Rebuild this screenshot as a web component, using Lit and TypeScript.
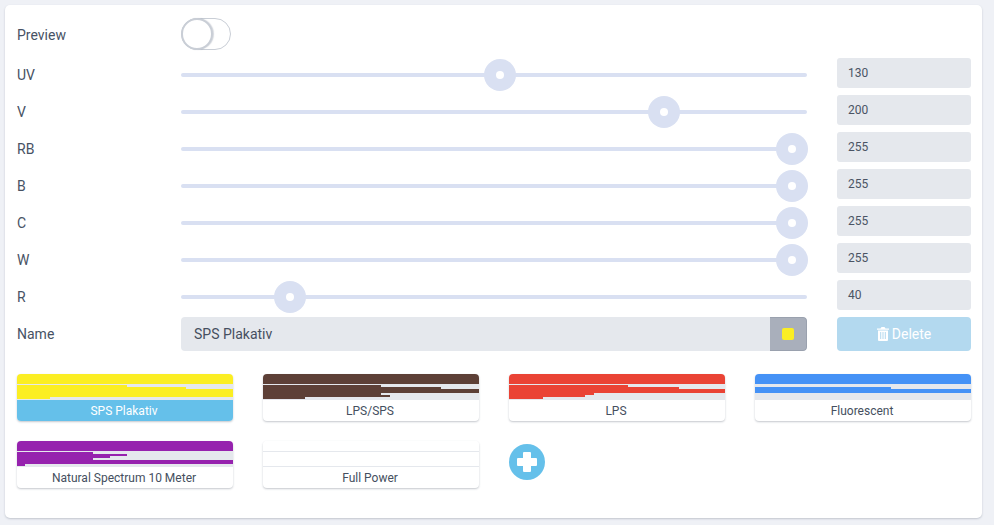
import { LitElement, html, css, svg } from "lit";
import { customElement } from "lit/decorators.js";

const sliders = [
  { l: "UV", v: 130 },
  { l: "V", v: 200 },
  { l: "RB", v: 255 },
  { l: "B", v: 255 },
  { l: "C", v: 255 },
  { l: "W", v: 255 },
  { l: "R", v: 40 },
];

const F = 216;
const cards = [
  { n: "SPS Plakativ", c: "#fbee23", w: [110, 169, F, F, F, F, 33], a: true },
  { n: "LPS/SPS", c: "#5d4037", w: [118, 178, F, F, 118, 127, 42] },
  { n: "LPS", c: "#ea4335", w: [119, 170, F, F, 85, 76, 34] },
  { n: "Fluorescent", c: "#4592f6", w: [0, 136, F, F, 0, 0, 0] },
  { n: "Natural Spectrum 10 Meter", c: "#9622ae", w: [76, 110, 93, 76, F, F, 8] },
  { n: "Full Power", c: "#ffffff", w: [F, F, F, F, F, F, F] },
];

@customElement("app-root")
export class AppRoot extends LitElement {
  static styles = css`
    :host {
      display: block;
      width: 994px;
      height: 525px;
      background: #eff1f6;
      font-family: Roboto, "Noto Sans", sans-serif;
      color: #3f4a5c;
      padding: 5px 12px 7px 5px;
      box-sizing: border-box;
      overflow: hidden;
    }
    .panel {
      background: #fff;
      border-radius: 5px;
      height: 513px;
      box-shadow: 0 1px 2px rgba(60, 70, 90, 0.25);
      padding: 13px 12px 0 12px;
      box-sizing: border-box;
    }
    .label {
      font-size: 14px;
      line-height: 35px;
      color: #475264;
    }
    .toggle {
      width: 50px;
      height: 32px;
      border: 1px solid #c9ced6;
      border-radius: 16px;
      box-sizing: border-box;
      position: relative;
      background: #fff;
    }
    .knob {
      position: absolute;
      left: -1px;
      top: -1px;
      width: 32px;
      height: 32px;
      box-sizing: border-box;
      border: 2px solid #c9ced6;
      border-radius: 50%;
      background: #fff;
      box-shadow: 1px 0 1px rgba(120, 130, 150, 0.3);
    }
    .slider {
      display: flex;
      align-items: center;
      height: 30px;
    }
    .track {
      width: 100%;
      height: 4px;
      border-radius: 2px;
      background: #d9e0f2;
      position: relative;
      top: 2px;
    }
    .thumb {
      position: absolute;
      top: -14px;
      width: 32px;
      height: 32px;
      margin-left: -16px;
      border-radius: 50%;
      background: #d9e0f2;
      display: flex;
      align-items: center;
      justify-content: center;
    }
    .thumb::after {
      content: "";
      width: 8px;
      height: 8px;
      border-radius: 50%;
      background: #fff;
    }
    .num {
      margin-left: 30px;
      width: 134px;
      height: 30px;
      background: #e5e8ed;
      border-radius: 3px;
      font-size: 12px;
      line-height: 30px;
      padding-left: 11px;
      box-sizing: border-box;
      color: #4a5464;
    }
    .grid-form {
      display: grid;
      grid-template-columns: 164px 626px 164px;
      grid-template-rows: 40px;
      grid-auto-rows: 37px;
    }
    .name-input {
      height: 34px;
      display: flex;
      background: #e5e8ed;
      border-radius: 4px;
      overflow: hidden;
    }
    .name-input .txt {
      flex: 1;
      font-size: 14px;
      line-height: 34px;
      padding-left: 13px;
      color: #454f60;
    }
    .swatch {
      width: 37px;
      background: #a9afbb;
      box-sizing: border-box;
      border: 1px solid #9aa1ae;
      border-left: 0;
      border-radius: 0 4px 4px 0;
      display: flex;
      align-items: center;
      justify-content: center;
    }
    .swatch i {
      display: block;
      width: 12px;
      height: 12px;
      background: #fbee23;
      border-radius: 2px;
    }
    .delete {
      margin-left: 30px;
      width: 134px;
      height: 34px;
      background: #b3d9ef;
      color: #fff;
      border-radius: 4px;
      font-size: 14px;
      display: flex;
      align-items: center;
      justify-content: center;
      gap: 3px;
    }
    .delete svg { width: 12px; height: 14px; }
    .cards {
      display: grid;
      grid-template-columns: repeat(4, 216px);
      column-gap: 30px;
      row-gap: 20px;
      margin-top: 20px;
      align-items: start;
    }
    .card {
      width: 216px;
      height: 47px;
      border-radius: 4px;
      background: #fff;
      box-shadow: 0 1px 2px rgba(60, 70, 90, 0.3);
      overflow: hidden;
    }
    .head { height: 10px; }
    .bars {
      height: 16px;
      box-sizing: border-box;
      background: #e5e8ed;
      padding-top: 1px;
    }
    .bar { height: 2px; }
    .name {
      height: 21px;
      line-height: 23px;
      padding-right: 2px;
      text-align: center;
      font-size: 12px;
      color: #454f60;
    }
    .card.active .name { background: #65c0ea; color: #fff; }
    .add { width: 36px; height: 36px; margin-top: 3px; display: block; }
  `;

  render() {
    return html`<div class="panel">
      <div class="grid-form">
        <div class="label">Preview</div>
        <div><div class="toggle"><div class="knob"></div></div></div>
        <div></div>
        ${sliders.map(
          (s) => html`<div class="label">${s.l}</div>
            <div class="slider">
              <div class="track">
                <div class="thumb" style="left:${(s.v * 595.4) / 255 + 15.6}px"></div>
              </div>
            </div>
            <div><div class="num">${s.v}</div></div>`
        )}
        <div class="label" style="line-height:34px">Name</div>
        <div class="name-input">
          <div class="txt">SPS Plakativ</div>
          <div class="swatch"><i></i></div>
        </div>
        <div class="delete">
          <svg viewBox="0 0 12 14" fill="#fff">
            <path d="M4.500 0h3l1 1.500H12v1.200H0V1.500h3.500zM1 3.600h10V13a1 1 0 0 1-1 1H2a1 1 0 0 1-1-1zM3.200 5v7h1V5zm2.300 0v7h1V5zm2.300 0v7h1V5z" />
          </svg>
          <span>Delete</span>
        </div>
      </div>
      <div class="cards">
        ${cards.map(
          (c) => html`<div class="card ${c.a ? "active" : ""}">
            <div class="head" style="background:${c.c}"></div>
            <div class="bars">
              ${c.w.map((w) => html`<div class="bar" style="width:${w}px;background:${c.c}"></div>`)}
            </div>
            <div class="name">${c.n}</div>
          </div>`
        )}
        <svg class="add" viewBox="0 0 36 36">
          <circle cx="18" cy="18" r="18" fill="#65c0ea"></circle>
          ${svg`<path d="M15 8h6a1 1 0 0 1 1 1v5h5a1 1 0 0 1 1 1v6a1 1 0 0 1-1 1h-5v5a1 1 0 0 1-1 1h-6a1 1 0 0 1-1-1v-5H9a1 1 0 0 1-1-1v-6a1 1 0 0 1 1-1h5V9a1 1 0 0 1 1-1z" fill="#fff"></path>`}
        </svg>
      </div>
    </div>`;
  }
}
